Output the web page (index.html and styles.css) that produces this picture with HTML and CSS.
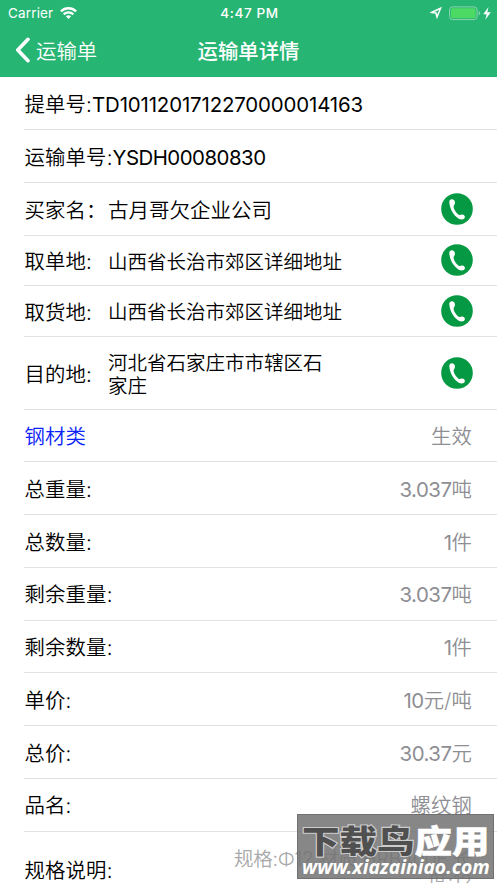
FILE: index.html
```html
<!DOCTYPE html>
<html lang="zh-CN">
<head>
<meta charset="utf-8">
<title>运输单详情</title>
<link rel="stylesheet" href="styles.css">
</head>
<body>
<svg class="defs" width="0" height="0">
  <symbol id="phone" viewBox="0 0 32 32">
    <circle cx="16" cy="16" r="15.8" fill="#069943"/>
    <path fill="#fff" d="M8.300 9C8.200 7.200 9.700 6 11.300 6.300C13 6.500 14.200 8.300 14 10.100C13.900 11.500 12.500 12.400 12.600 14C13 17 15.300 20 17.600 21.700C18.800 22.500 20 21.300 21.500 21.400C23.500 21.700 24.600 23.700 23.500 25.200C22.200 26.800 19.500 26.700 17.400 25.400C12.300 22.200 8.600 15.500 8.300 9Z"/>
  </symbol>
</svg>
<div class="screen">
  <header class="header">
    <div class="status">
      <div class="carrier"><span>Carrier</span>
        <svg width="17" height="12" viewBox="0 0 17 12" fill="none" stroke="#fff" stroke-width="2.3"><path d="M.9 4.400C5.200.2 11.800.2 16.100 4.400M3.700 7.300C6.400 4.700 10.600 4.700 13.300 7.300"/><path d="M8.500 12L5.900 9.300Q8.500 7.200 11.100 9.300Z" fill="#fff" stroke="none"/></svg>
      </div>
      <span class="clock">4:47 PM</span>
      <div class="power">
        <svg class="locate" width="12" height="12" viewBox="0 0 12 12" fill="none" stroke="#fff" stroke-width="1.500"><path d="M10.600 1.200L7 10L6 6L1.400 5.500Z"/></svg>
        <svg width="42" height="15" viewBox="0 0 42 15"><rect x=".6" y=".9" width="27.500" height="12.700" rx="3" fill="none" stroke="#8bd5ae" stroke-width="1"/><rect x="2" y="2.300" width="24.700" height="9.900" rx="1.600" fill="#4cd964"/><path d="M29.600 5.300Q31.200 5.500 31.200 7.200T29.600 9.200Z" fill="#8bd5ae"/><path d="M39.500 1L34.200 8.300H37.600L36.300 13.800L41.800 6.200H38.300Z" fill="#fff"/></svg>
      </div>
    </div>
    <nav class="nav">
      <div class="back"><svg width="16" height="26" viewBox="0 0 16 26" fill="none" stroke="#fff" stroke-width="3.600" stroke-linecap="round" stroke-linejoin="round"><path d="M13 2.300L2.800 13L13 23.700"/></svg><span>运输单</span></div>
      <h1 class="title">运输单详情</h1>
    </nav>
  </header>
  <main class="list">
    <div class="row"><span class="code">提单号:<span class="latin">TD1011201712270000014163</span></span></div>
    <div class="row"><span class="code order">运输单号:<span class="latin">YSDH00080830</span></span></div>
    <div class="row contact"><span class="label">买家名：</span><span class="text buyer">古月哥欠企业公司</span><svg class="call"><use href="#phone"/></svg></div>
    <div class="row contact short"><span class="label">取单地:</span><span class="text">山西省长治市郊区详细地址</span><svg class="call"><use href="#phone"/></svg></div>
    <div class="row contact short"><span class="label">取货地:</span><span class="text">山西省长治市郊区详细地址</span><svg class="call"><use href="#phone"/></svg></div>
    <div class="row contact tall"><span class="label">目的地:</span><span class="text">河北省石家庄市市辖区石<br>家庄</span><svg class="call"><use href="#phone"/></svg></div>
    <div class="row"><span class="category">钢材类</span><span class="value">生效</span></div>
    <div class="row"><span>总重量:</span><span class="value"><span class="num">3.037</span>吨</span></div>
    <div class="row"><span>总数量:</span><span class="value"><span class="num">1</span>件</span></div>
    <div class="row"><span>剩余重量:</span><span class="value"><span class="num">3.037</span>吨</span></div>
    <div class="row"><span>剩余数量:</span><span class="value"><span class="num">1</span>件</span></div>
    <div class="row"><span>单价:</span><span class="value"><span class="num">10</span>元/吨</span></div>
    <div class="row"><span>总价:</span><span class="value"><span class="num">30.37</span>元</span></div>
    <div class="row"><span>品名:</span><span class="value">螺纹钢</span></div>
    <div class="row spec"><span>规格说明:</span><span class="value">规格:Φ12 材质:HRB400E 长<br>度:12</span></div>
  </main>
  <div class="watermark">
    <div class="brand"><span class="dark">下载鸟</span><span>应用</span></div>
    <div class="site">www.xiazainiao.com</div>
  </div>
</div>
</body>
</html>
```
FILE: styles.css
```css
* { box-sizing: border-box; }
body {
  margin: 0;
  background: #fff;
  color: #000;
  font-family: Inter, "Noto Sans CJK SC", sans-serif;
  font-size: 20.4px;
  font-weight: 350;
}
.defs { position: absolute; }
.screen { position: relative; width: 497px; height: 883px; overflow: hidden; }
.header { height: 77px; background: #26b573; color: #fff; }
.status {
  display: grid;
  grid-template-columns: 1fr auto 1fr;
  height: 26px;
  padding: 0 6px 0 8px;
  align-items: center;
  font-size: 13.5px;
}
.carrier { display: flex; align-items: center; gap: 7px; font-weight: 400; letter-spacing: .15px; }
.clock { font-weight: 500; font-size: 13.5px; letter-spacing: .6px; }
.power { display: flex; justify-content: flex-end; align-items: center; gap: 7px; }
.nav {
  display: grid;
  grid-template-columns: 1fr auto 1fr;
  height: 51px;
  padding: 0 0 3px 15px;
  align-items: center;
}
.back { display: flex; align-items: center; gap: 5px; font-size: 20.4px; }
.title { margin: 0 15px 0 0; font-size: 20.4px; font-weight: 500; }
.list { padding: .4px 0 0 24px; }
.row {
  display: flex;
  align-items: center;
  height: 52.75px;
  padding: 3px 25px 0 .5px;
  border-bottom: 1px solid #e2e2e3;
  line-height: 28px;
  letter-spacing: .15px;
  white-space: nowrap;
}
.latin { font-weight: 400; letter-spacing: -.13px; }
.order .latin { letter-spacing: -.5px; }
.contact { padding: 4px 24.5px 0 .5px; }
.short { height: 50.5px; }
.tall { height: 73px; }
.label { width: 83.5px; flex: none; }
.text { font-size: 19.5px; line-height: 23px; letter-spacing: 0; }
.buyer { font-size: 20.5px; }
.call { width: 32px; height: 32px; margin: -4px 0 0 auto; }
.category { color: #0b24fb; }
.value { margin-left: auto; color: #8e8e93; text-align: right; }
.num { font-weight: 400; letter-spacing: -.5px; }
.spec { height: 76px; border: 0; }
.spec .value { font-size: 19.5px; line-height: 23px; letter-spacing: -.3px; color: #a8a8aa; }
.watermark {
  position: absolute;
  left: 297px;
  top: 814px;
  width: 197px;
  height: 65px;
  background: rgba(112, 112, 112, .84);
  border: 1px solid #707070;
  color: #fff;
  white-space: nowrap;
}
.brand {
  height: 41px;
  padding-left: 4px;
  font: 900 37.5px/39px "Noto Sans CJK SC", sans-serif;
  -webkit-text-stroke: .5px #fff;
  transform: translateY(4px) scaleY(.86);
}
.dark {
  color: #505050;
  -webkit-text-stroke: 2.5px #ccc;
  paint-order: stroke fill;
}
.site {
  padding-left: 4px;
  font: italic 700 19.3px/22px "Noto Sans", sans-serif;
}
```
